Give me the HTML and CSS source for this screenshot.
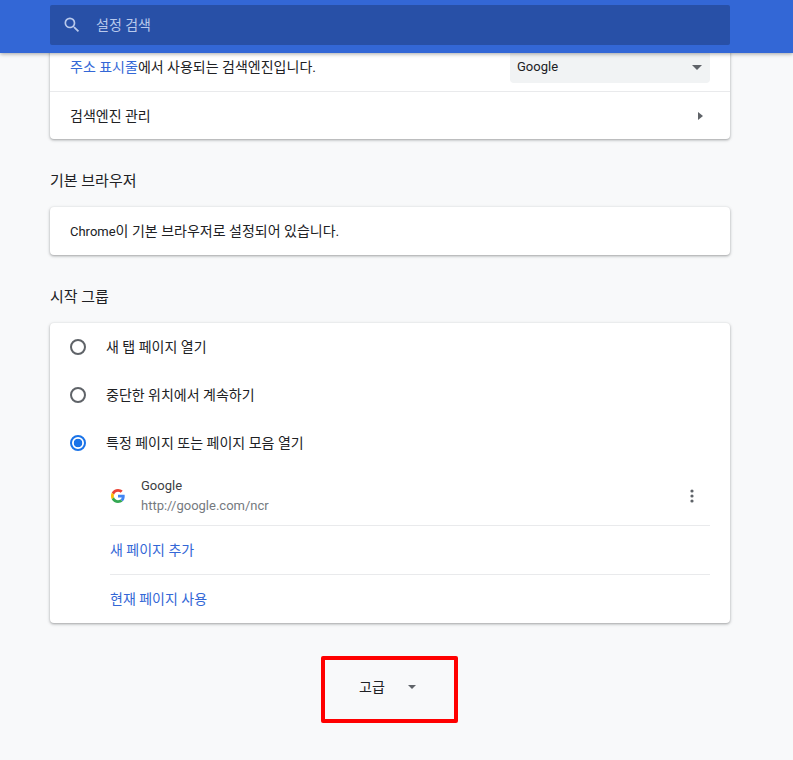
FILE: index.html
```html
<!DOCTYPE html>
<html lang="ko">
<head>
<meta charset="utf-8">
<title>설정</title>
<link rel="stylesheet" href="styles.css">
</head>
<body>
<header class="topbar">
  <div class="search">
    <svg class="search-icon" viewBox="0 0 24 24" width="20" height="20"><path fill="currentColor" d="M15.5 14h-.79l-.28-.27A6.47 6.47 0 0 0 16 9.5 6.5 6.5 0 1 0 9.5 16c1.61 0 3.09-.59 4.23-1.57l.27.28v.79l5 4.99L20.49 19l-4.99-5zm-6 0C7.01 14 5 11.99 5 9.5S7.01 5 9.5 5 14 7.01 14 9.5 11.99 14 9.5 14z"/></svg>
    <span class="search-text">설정 검색</span>
  </div>
</header>
<main class="page">
  <section class="card card-first">
    <div class="row row-split">
      <span><a class="link">주소 표시줄</a>에서 사용되는 검색엔진입니다.</span>
      <div class="select"><span class="latin">Google</span><i class="caret"></i></div>
    </div>
    <div class="row row-split row-rule">
      <span>검색엔진 관리</span>
      <i class="arrow"></i>
    </div>
  </section>

  <h2 class="heading">기본 브라우저</h2>
  <section class="card">
    <div class="row"><span><span class="latin">Chrome</span>이 기본 브라우저로 설정되어 있습니다.</span></div>
  </section>

  <h2 class="heading">시작 그룹</h2>
  <section class="card">
    <div class="row radio-row"><i class="radio"></i><span>새 탭 페이지 열기</span></div>
    <div class="row radio-row"><i class="radio"></i><span>중단한 위치에서 계속하기</span></div>
    <div class="row radio-row"><i class="radio radio-on"></i><span>특정 페이지 또는 페이지 모음 열기</span></div>
    <div class="sub">
      <div class="site">
        <svg class="favicon" viewBox="0 0 48 48" width="14" height="14">
          <path fill="#EA4335" d="M24 9.5c3.54 0 6.71 1.22 9.21 3.6l6.85-6.85C35.9 2.38 30.47 0 24 0 14.62 0 6.51 5.38 2.56 13.22l7.98 6.19C12.43 13.72 17.74 9.5 24 9.5z"/>
          <path fill="#4285F4" d="M46.98 24.55c0-1.57-.15-3.09-.38-4.55H24v9.02h12.94c-.58 2.96-2.26 5.48-4.78 7.18l7.73 6c4.51-4.18 7.09-10.36 7.09-17.65z"/>
          <path fill="#FBBC05" d="M10.53 28.59A14.5 14.5 0 0 1 9.5 24c0-1.6.38-3.13 1.03-4.59l-7.98-6.19A23.9 23.9 0 0 0 0 24c0 3.88.92 7.54 2.56 10.78l7.97-6.19z"/>
          <path fill="#34A853" d="M24 48c6.48 0 11.93-2.13 15.89-5.81l-7.73-6c-2.15 1.45-4.92 2.3-8.16 2.3-6.26 0-11.57-4.22-13.47-9.91l-7.98 6.19C6.51 42.62 14.62 48 24 48z"/>
        </svg>
        <div class="site-text latin">
          <div class="site-name">Google</div>
          <div class="site-url">http://google.com/ncr</div>
        </div>
        <svg class="dots" viewBox="0 0 4 16" width="4" height="16"><circle cx="2" cy="3" r="1.6"/><circle cx="2" cy="8" r="1.6"/><circle cx="2" cy="13" r="1.6"/></svg>
      </div>
      <div class="action"><a class="link">새 페이지 추가</a></div>
      <div class="action"><a class="link">현재 페이지 사용</a></div>
    </div>
  </section>

  <div class="advanced">
    <span>고급</span><i class="caret caret-small"></i>
  </div>
</main>
</body>
</html>
```

FILE: styles.css
```css
* { box-sizing: border-box; }
html, body { margin: 0; height: 760px; overflow: hidden; }
body {
  background: #f8f9fa;
  color: #202124;
  font-family: Roboto, "Noto Sans CJK KR", sans-serif;
  font-size: 14px;
  line-height: 20px;
}
.latin { font-size: 13px; }
.topbar {
  position: relative;
  z-index: 2;
  height: 53px;
  padding-top: 5px;
  padding-left: 50px;
  background: #3367d6;
  box-shadow: 0 1px 4px rgba(0, 0, 0, .35);
}
.search {
  display: flex;
  align-items: center;
  width: 680px;
  height: 40px;
  padding-left: 12px;
  border-radius: 2px;
  background: #2850a7;
  color: #b9c9ec;
}
.search-icon { flex: none; }
.search-text { margin-left: 14px; }
.page { width: 680px; margin-left: 50px; }
.card {
  background: #fff;
  border-radius: 4px;
  box-shadow: 0 1px 2px rgba(60, 64, 67, .3), 0 1px 3px 1px rgba(60, 64, 67, .15);
}
.card-first { margin-top: -10px; border-radius: 0 0 4px 4px; }
.row {
  display: flex;
  align-items: center;
  height: 48px;
  padding: 0 20px;
}
.row-split { justify-content: space-between; }
.row-rule { border-top: 1px solid #e9eaec; }
.link { color: #3367d6; text-decoration: none; }
.select {
  display: flex;
  align-items: center;
  justify-content: space-between;
  width: 200px;
  height: 32px;
  padding: 0 8px 0 7px;
  border-radius: 4px;
  background: #f1f3f4;
}
.caret {
  display: block;
  width: 0;
  height: 0;
  border-left: 5px solid transparent;
  border-right: 5px solid transparent;
  border-top: 5px solid #5f6368;
}
.caret-small { border-left-width: 4.5px; border-right-width: 4.5px; border-top-width: 4.5px; }
.arrow {
  display: block;
  width: 0;
  height: 0;
  margin-right: 7px;
  border-top: 4.5px solid transparent;
  border-bottom: 4.5px solid transparent;
  border-left: 5px solid #5f6368;
}
.heading {
  height: 68px;
  margin: 0;
  padding-top: 32px;
  font-size: 15px;
  font-weight: 400;
  line-height: 20px;
}
.radio-row { gap: 20px; }
.radio {
  display: block;
  flex: none;
  width: 16px;
  height: 16px;
  border: 2px solid #5f6368;
  border-radius: 50%;
}
.radio-on {
  border-color: #1a73e8;
  background: radial-gradient(circle, #1a73e8 0 4px, transparent 4.6px);
}
.sub { padding: 0 20px 0 60px; }
.site {
  display: flex;
  align-items: center;
  height: 59px;
  padding-left: 1px;
  border-bottom: 1px solid #e9eaec;
}
.favicon { flex: none; }
.site-text { flex: 1; margin-left: 16px; }
.site-name { color: #3c4043; }
.site-url { color: #757a80; }
.dots { flex: none; margin-right: 16px; fill: #5f6368; }
.action {
  display: flex;
  align-items: center;
  height: 48px;
}
.action + .action { height: 49px; border-top: 1px solid #e9eaec; }
.advanced {
  display: flex;
  align-items: center;
  gap: 23px;
  width: 137px;
  height: 67px;
  margin: 33px 0 0 271px;
  padding: 0 0 6px 34px;
  border: 4px solid #f00;
  border-radius: 2px;
}
```
